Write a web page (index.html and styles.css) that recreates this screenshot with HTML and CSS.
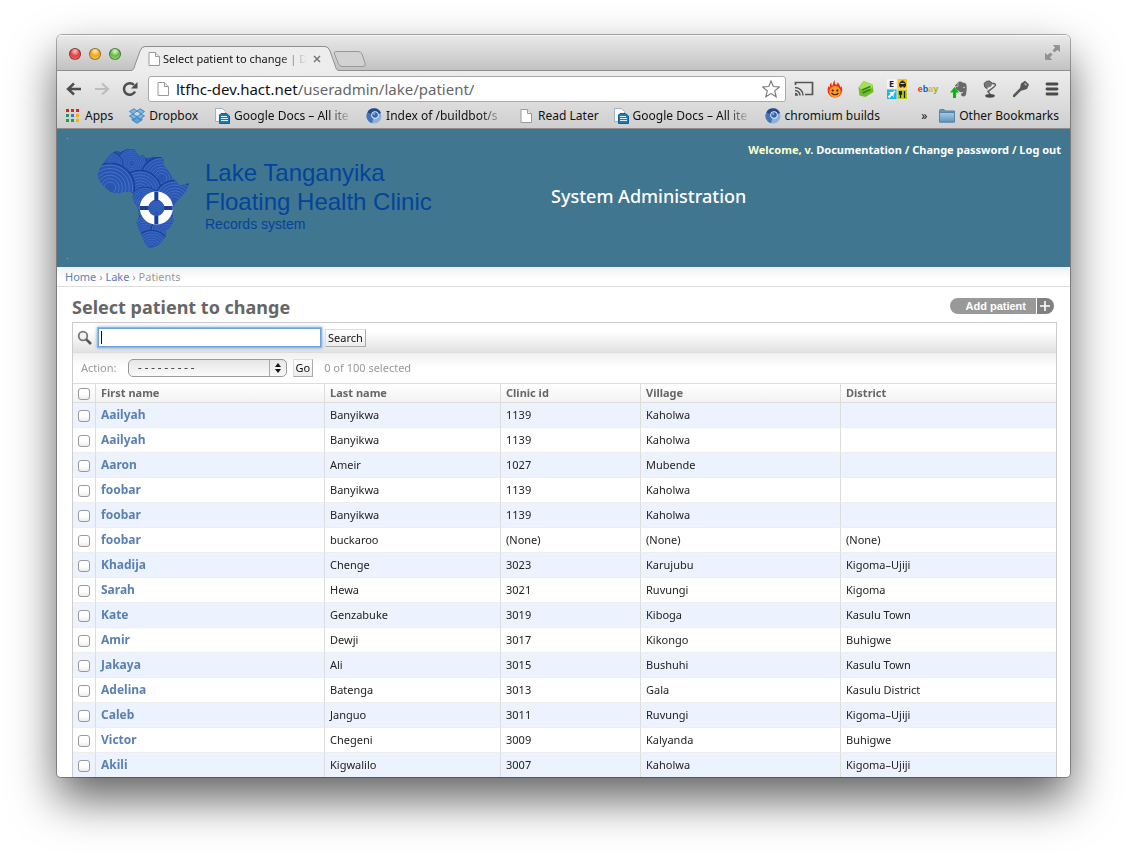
FILE: index.html
```
<!DOCTYPE html>
<html lang="en">
<head>
<meta charset="utf-8">
<title>Select patient to change</title>
<link rel="stylesheet" href="styles.css">
</head>
<body>
<svg class="defs" aria-hidden="true">
  <defs>
    <linearGradient id="gFolder" x1="0" y1="0" x2="0" y2="1"><stop offset="0" stop-color="#a5cce3"/><stop offset="1" stop-color="#5e97bd"/></linearGradient>
    <symbol id="page" viewBox="0 0 12 14"><path d="M1 .5h6.500L11.500 4.500v9H1z" fill="#fff" stroke="#9a9a9a"/><path d="M7.500.5v4h4" fill="#e8e8e8" stroke="#9a9a9a"/></symbol>
    <symbol id="docs" viewBox="0 0 16 16"><path d="M1.500.5h7l3 3v10h-10z" fill="#fafafa" stroke="#9bb3c4"/><path d="M7 5.500h5.500L15.500 8v7.500H5.500V7z" fill="#1f78b4" stroke="#0f5f97"/><path d="M7 8.500h6M7 10.500h7M7 12.500h7" stroke="#d8efff"/></symbol>
    <symbol id="chromium" viewBox="0 0 16 16"><circle cx="8" cy="8" r="7.500" fill="#8fb0dd"/><path d="M8 8L1.300 4.500A7.500 7.500 0 0 0 6 15.200z" fill="#4674b8"/><path d="M8 8L1.300 4.500A7.500 7.500 0 0 1 15 5z" fill="#24488a"/><circle cx="9" cy="7" r="3.800" fill="#dfe9f7"/><circle cx="9" cy="7" r="2.800" fill="#2f66b5"/><circle cx="8.200" cy="6" r="1" fill="#8db4ea"/></symbol>
    <symbol id="hill" viewBox="-52 -52 104 104"><circle r="51" fill="#2a56b1" stroke="#1a3f9a" stroke-width="3"/><g fill="none" stroke="#4a79cc" stroke-width="1.800"><circle r="47"/><circle r="40"/><circle r="33"/><circle r="26"/><circle r="19"/><circle r="12"/></g></symbol>
    <clipPath id="africa"><path d="M78 32L92 36L110 28L132 27L138 37L148 48L160 46L165 53L172 55L190 50L215 52L222 60L219 72L238 98L248 115L262 128L268 137L280 134L297 129L290 150L275 168L258 185L246 205L248 225L250 245L240 262L228 272L226 290L215 303L205 315L185 323L175 322L165 308L158 292L146 265L140 250L148 232L144 205L135 190L128 172L132 162L122 155L100 156L80 158L62 156L45 142L28 122L24 105L30 85L45 62L62 42Z"/></clipPath>
  </defs>
</svg>
<div class="window">
  <header class="chrome">
    <div class="titlebar">
      <div class="lights"><button class="light red" aria-label="Close"></button><button class="light amber" aria-label="Minimise"></button><button class="light green" aria-label="Zoom"></button></div>
      <svg class="slope" viewBox="0 0 14 25"><path d="M0 25C3 24 3 22 4 19L9 5Q10.500 .5 14 .5V25z" fill="#ededed"/><path d="M0 24.500C3 24 3 22 4 19L9 5Q10.500 .5 14 .5" fill="none" stroke="#8f8f8f"/></svg>
      <div class="tab"><svg class="ic-page"><use href="#page"/></svg><span class="tab-title fade">Select patient to change | D</span><button class="tab-close" aria-label="Close tab"><svg viewBox="0 0 8 8"><path d="M1 1l6 6M7 1L1 7" stroke="#777" stroke-width="1.500"/></svg></button></div>
      <svg class="slope" viewBox="0 0 14 25"><path d="M14 25C11 24 11 22 10 19L5 5Q3.500 .5 0 .5V25z" fill="#ededed"/><path d="M14 24.500C11 24 11 22 10 19L5 5Q3.500 .5 0 .5" fill="none" stroke="#8f8f8f"/></svg>
      <button class="newtab" aria-label="New tab"><svg viewBox="0 0 34 18"><path d="M2.500 1.500H25Q28 1.500 29 4L32 13Q33 16.500 30 16.500H9Q6.500 16.500 5.500 14L1.500 4Q1 1.500 2.500 1.500z" fill="#d2d2d2" stroke="#989898"/></svg></button>
      <button class="fullscreen" aria-label="Full screen"><svg viewBox="0 0 15 15"><path d="M8.500.5h6v6L12.500 4.500 9.500 7 8 5.500 10.500 2.500zM.5 8.500l2 2L5.500 8 7 9.500 4.500 12.500l2 2h-6z" fill="#929292" stroke="#7f7f7f" stroke-width=".6"/></svg></button>
    </div>
    <div class="toolbar">
      <button class="nav" aria-label="Back"><svg viewBox="0 0 16 16"><path d="M8 2.500L2 8l6 5.500M2.500 8H15" fill="none" stroke="#4d4d4d" stroke-width="2.400"/></svg></button>
      <button class="nav" aria-label="Forward"><svg viewBox="0 0 16 16"><path d="M8 2.500L14 8l-6 5.500M13.500 8H1" fill="none" stroke="#bdbdbd" stroke-width="2.200"/></svg></button>
      <button class="nav" aria-label="Reload"><svg viewBox="0 0 16 16"><path d="M13 10.500A5.800 5.800 0 1 1 12 4" fill="none" stroke="#4d4d4d" stroke-width="2.500"/><path d="M15.500 1v6.500H9z" fill="#4d4d4d"/></svg></button>
      <div class="omnibox"><svg class="ic-page"><use href="#page"/></svg><span class="url">ltfhc-dev.hact.net<i>/useradmin/lake/patient/</i></span><svg class="star" viewBox="0 0 18 18"><path d="M9 1l2.300 5.500 6 .5-4.600 3.900 1.500 5.900L9 13.600l-5.200 3.200 1.500-5.900L.7 7l6-.5z" fill="#fff" stroke="#777" stroke-width="1.100"/></svg></div>
      <div class="exts">
        <svg class="wide" viewBox="0 0 20 18"><path d="M1.500 5V2.500h17v12H11" fill="none" stroke="#555" stroke-width="1.700"/><path d="M1 10.500a5 5 0 0 1 5 5M1 7.500a8 8 0 0 1 8 8" fill="none" stroke="#555" stroke-width="1.500"/><path d="M1 12.700a3 3 0 0 1 3 3H1z" fill="#555"/></svg>
        <svg viewBox="0 0 16 18"><path d="M8 0Q7 3 9 5Q11 4 10.500 2Q13.500 5 13 7.500L14.500 6Q16 10 14.500 13Q12.500 17.500 8 17.500T1 13Q-.3 9 1.500 6L3 7.500Q2 4 4.500 2.500Q4 5 5.500 5.500Q5.500 2 8 0z" fill="#e8351a"/><circle cx="8" cy="11.700" r="5.700" fill="#ff9b22"/><circle cx="5.700" cy="10.500" r="1.100" fill="#3c1705"/><circle cx="10.300" cy="10.500" r="1.100" fill="#3c1705"/><path d="M4.500 13Q8 16.500 11.500 13" fill="none" stroke="#4a1b05" stroke-width="1.100"/></svg>
        <svg viewBox="0 0 17 18"><path d="M6 1L15 4.500 16 12 8 17 2 15.500 1 7.500z" fill="#74bd2a"/><path d="M6 1L15 4.500 14.500 8 5 10 1 7.500z" fill="#a5df52"/><path d="M4.500 10L13 6.500M5 13L13 9.500" stroke="#2d861f" stroke-width="1.500"/></svg>
        <svg class="wide" viewBox="0 0 20 20"><path fill="#f4f4f4" d="M0 0h9.500v9.500H0z"/><path fill="#f9c808" d="M10.500 0H20v9.500h-9.500z"/><path fill="#19b7ea" d="M0 10.500h9.500V20H0z"/><path fill="#bdca22" d="M10.500 10.500H20V20h-9.500z"/><text x="2" y="8" class="e">E</text><path d="M12 5l1.500-2.500h1v-1h2v1h1L19 5v2.500h-1v1h-1.500v-1h-2v1H13v-1h-1z" fill="#222"/><path d="M13.500 4.500h4" stroke="#f9c808"/><path d="M1.500 18.500L8 12" stroke="#fff" stroke-width="1.800"/><path d="M2 13l4 .3 1 5.200z M1.500 16.500h2v2z" fill="#fff"/><path d="M13.500 12v7M12.500 12v3h2v-3M17.500 12v7" fill="none" stroke="#222" stroke-width="1.300"/></svg>
        <span class="ebay"><b class="r">e</b><b class="b">b</b><b class="y">a</b><b class="g">y</b></span>
        <svg viewBox="0 0 18 18"><path d="M5 5.500L8 2.500Q8 1.500 10 1.500Q12 1.500 12.500 2.500Q16 2.500 16.500 5Q17.300 9 16 14.500Q15.500 16.500 13.500 16.500Q11 16.500 11 14.500Q11 12.500 13 13V12Q11 12.500 10 12L6 9z" fill="#686868"/><path d="M8 2.500v4H5" fill="none" stroke="#ccc" stroke-width=".7"/><circle cx="14" cy="7.500" r=".8" fill="#ddd"/><path d="M4.500 7l4.500 5.500H6V18H3v-5.500H0z" fill="#08b70d"/></svg>
        <svg viewBox="0 0 18 18"><path d="M3 3.500Q5 .5 8.500 1L13 4.500 6.500 9Q3 8 3 3.500z" fill="#777" stroke="#555"/><path d="M6.500 8.500Q10 9 12.500 4.500" fill="none" stroke="#eee" stroke-width="2"/><path d="M12 3Q16 4.500 13.500 6.500L7 11.500 9.500 15" fill="none" stroke="#666" stroke-width="1.600"/><ellipse cx="9" cy="15.800" rx="4.800" ry="1.900" fill="#484848"/></svg>
        <svg viewBox="0 0 18 18"><path d="M9 3.500L13 .8l4 3.700-2 4.500-4 1.200-2 .5-6.500 6.500-1.500-.2v-2L8 8z" fill="#585858"/><path d="M12.500 3.500l2 1.800" stroke="#bbb" stroke-width="1.500"/></svg>
        <button class="menu" aria-label="Menu"><svg viewBox="0 0 18 18"><path d="M4 4h10M4 9h10M4 14h10" stroke="#4a4a4a" stroke-width="2.800" stroke-linecap="round"/></svg></button>
      </div>
    </div>
    <nav class="bookmarks">
      <a href="#"><svg class="bm" viewBox="0 0 16 16"><path fill="#d22" d="M1 1h3v3H1zM6 1h3v3H6zM11 1h3v3h-3z"/><path fill="#1f9d58" d="M1 6h3v3H1zM1 11h3v3H1zM6 11h3v3H6z"/><path fill="#2a7de1" d="M6 6h3v3H6z"/><path fill="#f4b400" d="M11 6h3v3h-3zM11 11h3v3h-3z"/></svg><span>Apps</span></a>
      <a href="#"><svg class="bm" viewBox="0 0 16 16"><path d="M5 .7L8 3 4 6 .5 3.500zM11 .7L8 3l4 3 3.500-2.500zM.5 8L4 6l4 2.500L5 11zM15.500 8L12 6 8 8.500l3 2.500z" fill="#78b7ea" stroke="#2b78bd" stroke-width=".8"/><path d="M8 9.300L5 12l-2-1.300V12l5 3.300 5-3.300v-1.300L11 12z" fill="#5ea3de" stroke="#2b78bd" stroke-width=".8"/></svg><span>Dropbox</span></a>
      <a href="#"><svg class="bm"><use href="#docs"/></svg><span class="long fade">Google Docs – All ite</span></a>
      <a href="#"><svg class="bm"><use href="#chromium"/></svg><span class="long fade">Index of /buildbot/s</span></a>
      <a href="#"><svg class="bm-page"><use href="#page"/></svg><span>Read Later</span></a>
      <a href="#"><svg class="bm"><use href="#docs"/></svg><span class="long fade">Google Docs – All ite</span></a>
      <a href="#"><svg class="bm"><use href="#chromium"/></svg><span>chromium builds</span></a>
      <div class="other"><button class="more" aria-label="More bookmarks">»</button><a href="#"><svg class="bm" viewBox="0 0 16 16"><path d="M.5 14V2.500Q.5 1.500 1.500 1.500H5L6.500 3H15.500V14z" fill="#5e97bd" stroke="#5585a5"/><path d="M.5 4.500h15V14H.5z" fill="url(#gFolder)" stroke="#5585a5"/></svg><span>Other Bookmarks</span></a></div>
    </nav>
  </header>
  <main class="page">
    <div class="banner">
      <svg class="logo" viewBox="67 137 133 122">
        <path d="M67 138h1v1h-1zM67 258h1v1h-1z" fill="#9fa872"/>
        <g transform="translate(90 140) scale(.33333)">
          <g clip-path="url(#africa)">
            <rect width="330" height="345" fill="#2450ac"/>
            <use href="#hill" x="80" y="25" width="90" height="90"/><use href="#hill" x="20" y="35" width="80" height="80"/><use href="#hill" x="150" y="50" width="130" height="130"/>
            <use href="#hill" x="85" y="90" width="130" height="130"/><use href="#hill" x="-15" y="68" width="150" height="150"/>
            <use href="#hill" x="190" y="120" width="130" height="130"/><use href="#hill" x="115" y="140" width="100" height="100"/><use href="#hill" x="160" y="180" width="80" height="80"/>
            <use href="#hill" x="110" y="225" width="110" height="110"/><use href="#hill" x="180" y="225" width="110" height="110"/><use href="#hill" x="130" y="270" width="110" height="110"/>
          </g>
          <circle cx="199" cy="204" r="37" fill="none" stroke="#fff" stroke-width="25"/>
          <path d="M199 155v26M199 227v26M150 204h26M222 204h26" stroke="#163f96" stroke-width="12"/>
        </g>
      </svg>
      <div class="org"><p>Lake Tanganyika</p><p>Floating Health Clinic</p><p class="sub">Records system</p></div>
      <h1 class="sysname">System Administration</h1>
      <p class="user">Welcome, v. <a href="#">Documentation</a> / <a href="#">Change password</a> / <a href="#">Log out</a></p>
    </div>
    <nav class="crumbs"><a href="#">Home</a> › <a href="#">Lake</a> › Patients</nav>
    <section class="content">
      <div class="heading"><h2>Select patient to change</h2><a class="add" href="#"><span>Add patient</span><b class="plus"><svg viewBox="0 0 10 10"><path d="M5 0v10M0 5h10" stroke="#fff" stroke-width="1.600"/></svg></b></a></div>
      <div class="changelist">
        <form class="search"><label for="q" aria-label="Search"><svg viewBox="0 0 16 16"><circle cx="6" cy="6" r="4.300" fill="#f2f2f2" stroke="#777" stroke-width="1.800"/><path d="M9.300 9.300L14 14" stroke="#555" stroke-width="2.600"/></svg></label><input id="q" type="text" autofocus><button type="button">Search</button></form>
        <form class="actions"><label for="act">Action:</label><span class="pick"><select id="act"><option>---------</option></select><svg viewBox="0 0 6 10"><path d="M3 0l3 4H0zM3 10l3-4H0z" fill="#111"/></svg></span><button type="button">Go</button><span>0 of 100 selected</span></form>
        <table>
          <colgroup><col class="c-box"><col class="c-first"><col class="c-last"><col class="c-id"><col class="c-village"><col></colgroup>
          <thead><tr><th><input type="checkbox" aria-label="Select all"></th><th>First name</th><th>Last name</th><th>Clinic id</th><th>Village</th><th>District</th></tr></thead>
          <tbody>
            <tr><td><input type="checkbox" aria-label="Select"></td><th><a href="#">Aailyah</a></th><td>Banyikwa</td><td>1139</td><td>Kaholwa</td><td></td></tr>
            <tr><td><input type="checkbox" aria-label="Select"></td><th><a href="#">Aailyah</a></th><td>Banyikwa</td><td>1139</td><td>Kaholwa</td><td></td></tr>
            <tr><td><input type="checkbox" aria-label="Select"></td><th><a href="#">Aaron</a></th><td>Ameir</td><td>1027</td><td>Mubende</td><td></td></tr>
            <tr><td><input type="checkbox" aria-label="Select"></td><th><a href="#">foobar</a></th><td>Banyikwa</td><td>1139</td><td>Kaholwa</td><td></td></tr>
            <tr><td><input type="checkbox" aria-label="Select"></td><th><a href="#">foobar</a></th><td>Banyikwa</td><td>1139</td><td>Kaholwa</td><td></td></tr>
            <tr><td><input type="checkbox" aria-label="Select"></td><th><a href="#">foobar</a></th><td>buckaroo</td><td>(None)</td><td>(None)</td><td>(None)</td></tr>
            <tr><td><input type="checkbox" aria-label="Select"></td><th><a href="#">Khadija</a></th><td>Chenge</td><td>3023</td><td>Karujubu</td><td>Kigoma–Ujiji</td></tr>
            <tr><td><input type="checkbox" aria-label="Select"></td><th><a href="#">Sarah</a></th><td>Hewa</td><td>3021</td><td>Ruvungi</td><td>Kigoma</td></tr>
            <tr><td><input type="checkbox" aria-label="Select"></td><th><a href="#">Kate</a></th><td>Genzabuke</td><td>3019</td><td>Kiboga</td><td>Kasulu Town</td></tr>
            <tr><td><input type="checkbox" aria-label="Select"></td><th><a href="#">Amir</a></th><td>Dewji</td><td>3017</td><td>Kikongo</td><td>Buhigwe</td></tr>
            <tr><td><input type="checkbox" aria-label="Select"></td><th><a href="#">Jakaya</a></th><td>Ali</td><td>3015</td><td>Bushuhi</td><td>Kasulu Town</td></tr>
            <tr><td><input type="checkbox" aria-label="Select"></td><th><a href="#">Adelina</a></th><td>Batenga</td><td>3013</td><td>Gala</td><td>Kasulu District</td></tr>
            <tr><td><input type="checkbox" aria-label="Select"></td><th><a href="#">Caleb</a></th><td>Janguo</td><td>3011</td><td>Ruvungi</td><td>Kigoma–Ujiji</td></tr>
            <tr><td><input type="checkbox" aria-label="Select"></td><th><a href="#">Victor</a></th><td>Chegeni</td><td>3009</td><td>Kalyanda</td><td>Buhigwe</td></tr>
            <tr><td><input type="checkbox" aria-label="Select"></td><th><a href="#">Akili</a></th><td>Kigwalilo</td><td>3007</td><td>Kaholwa</td><td>Kigoma–Ujiji</td></tr>
          </tbody>
        </table>
      </div>
    </section>
  </main>
</div>
</body>
</html>
```
FILE: styles.css
```
* { box-sizing: border-box; }
body { margin: 0; height: 100vh; padding: 35px 57px 79px; display: flex; overflow: hidden; background: #fff; font: 11px/14px "Noto Sans", "Open Sans", sans-serif; color: #222; }
p, h1, h2 { margin: 0; }
a { text-decoration: none; color: #5b80b2; }
button { font: inherit; border: 0; padding: 0; background: none; color: inherit; }
svg { display: block; flex: none; }
.defs { position: absolute; width: 0; height: 0; }
.window { flex: 1; min-width: 0; display: flex; flex-direction: column; overflow: hidden; border-radius: 5px 5px 4px 4px; background: #fff; box-shadow: 0 0 0 1px rgba(0, 0, 0, .3), 0 22px 46px rgba(0, 0, 0, .62); }

.chrome { flex: none; background: linear-gradient(#ededed 36px, #cfcfcf); border-bottom: 1px solid #8d8d8d; color: #111; font-size: 12px; line-height: 16px; }
.titlebar { display: flex; align-items: flex-end; height: 36px; background: linear-gradient(#eaeaea, #c2c2c2); border-bottom: 1px solid #8f8f8f; box-shadow: inset 0 1px #f8f8f8; }
.lights { display: flex; gap: 8px; padding: 0 10px 10px 12px; }
.light { width: 12px; height: 12px; border-radius: 50%; border: 1px solid rgba(0, 0, 0, .4); }
.red { background: radial-gradient(circle at 50% 25%, #ffc9c9, #e33f40 50%, #f07b74); }
.amber { background: radial-gradient(circle at 50% 25%, #fff0b5, #f2a51d 50%, #ffd65d); }
.green { background: radial-gradient(circle at 50% 25%, #dcfbca, #66b846 50%, #a9e884); }
.slope { width: 14px; height: 25px; margin-bottom: -1px; }
.tab { display: flex; align-items: center; width: 180px; height: 25px; margin-bottom: -1px; padding-left: 3px; background: #ededed; border-top: 1px solid #8f8f8f; }
.ic-page { width: 12px; height: 14px; }
.tab-title { width: 144px; margin-left: 3px; font-size: 11px; }
.fade { overflow: hidden; white-space: nowrap; -webkit-mask-image: linear-gradient(90deg, #000 80%, transparent); mask-image: linear-gradient(90deg, #000 80%, transparent); }
.tab-close { margin-left: 6px; }
.tab-close svg { width: 8px; height: 8px; }
.newtab { margin: 0 0 2px -6px; }
.newtab svg { width: 34px; height: 18px; }
.fullscreen { margin: 0 10px 10px auto; }
.fullscreen svg { width: 15px; height: 15px; }

.toolbar { display: flex; align-items: center; padding: 5px 8px 0 9px; }
.nav { width: 28px; }
.nav svg { width: 16px; height: 16px; }
.omnibox { flex: 1; min-width: 0; display: flex; align-items: center; height: 26px; margin-left: -2px; padding: 0 5px 0 8px; border: 1px solid #aaa; border-radius: 3px; background: #fff; }
.url { flex: 1; margin-left: 7px; font-size: 15px; line-height: 20px; white-space: nowrap; overflow: hidden; }
.url i { font-style: normal; color: #666; }
.star { width: 18px; height: 18px; }
.exts { display: flex; align-items: center; justify-content: space-between; width: 268px; margin-left: 8px; }
.exts svg { width: 18px; height: 18px; margin: 0 1px; overflow: visible; }
.exts .wide { width: 20px; height: 20px; margin: 0; }
.e { font: bold 9px "Noto Sans", sans-serif; fill: #222; }
.ebay { width: 20px; justify-content: center; font: bold 9px/16px "Liberation Sans", sans-serif; display: flex; }
.r { color: #e53238; } .b { color: #0064d2; } .y { color: #f5af02; } .g { color: #86b817; }

.bookmarks { display: flex; align-items: center; gap: 14px; height: 26px; padding: 1px 11px 0 8px; white-space: nowrap; }
.bookmarks a { display: flex; align-items: center; gap: 4px; color: #111; }
.bm { width: 16px; height: 16px; }
.bm-page { width: 12px; height: 14px; margin: 0 2px; }
.long { width: 118px; }
.bookmarks > a:nth-child(-n+2) { margin-right: 2px; }
.other { display: flex; gap: 12px; margin-left: auto; }

.page { flex: 1; min-height: 0; overflow: hidden; }
.banner { position: relative; display: flex; height: 138px; padding: 8px 9px 0 10px; background: #417690; }
.logo { width: 133px; height: 122px; }
.org { margin: 21px 0 0 5px; width: 346px; font: 24px/29px "Liberation Sans", Arial, sans-serif; color: #03449b; }
.org .sub { font-size: 14px; line-height: 16px; }
.sysname { margin-top: 47px; font-size: 18px; line-height: 24px; font-weight: 500; color: #fff; white-space: nowrap; }
.user { position: absolute; top: 14px; right: 9px; font-weight: 700; color: #ffc; }
.user a { color: #fff; }
.crumbs { padding: 3px 8px 2px; height: 20px; border-bottom: 1px solid #ddd; background: linear-gradient(#f0f0f0, #fff 12px); color: #999; }
.content { padding: 8px 13px 0 15px; }
.heading { display: flex; justify-content: space-between; padding-right: 3px; height: 27px; }
h2 { font-size: 18px; line-height: 24px; color: #666; }
.add { display: flex; height: 16px; margin-top: 3px; font: bold 11px/16px "Liberation Sans", Arial, sans-serif; color: #fff; }
.add span { padding: 0 10px 0 16px; border-radius: 8px 0 0 8px; background: #999; }
.plus { width: 17px; margin-left: 1px; padding: 3px; border-radius: 0 8px 8px 0; background: #808080; }
.plus svg { width: 10px; height: 10px; }
.changelist { border: 1px solid #ccc; }
.search, .actions { display: flex; align-items: center; }
.search { height: 30px; padding-left: 4px; background: linear-gradient(#fff 8px, #e2e2e2); border-bottom: 1px solid #ddd; }
.search svg { width: 16px; height: 16px; }
.search input { width: 223px; height: 19px; margin: 0 4px 0 5px; padding: 0 3px; border: 1px solid #6fa3d8; outline: 0; box-shadow: 0 0 0 1px #8db8e4, 0 0 3px 1px #76a9dc; background: #fff linear-gradient(#111, #111) 2px 50% / 1px 13px no-repeat; font: inherit; }
form button { height: 18px; padding: 0 2px; border: 1px solid; border-color: #ddd #aaa #aaa #ddd; background: linear-gradient(#fff, #ececec); color: #111; }
.actions { height: 30px; padding-left: 8px; color: #999; background: linear-gradient(#f0f0f0, #fff 14px); }
.pick { position: relative; margin: 0 6px 0 11px; }
.pick select { display: block; width: 159px; height: 18px; padding: 0 8px; border: 1px solid #999; border-radius: 5px; appearance: none; background: linear-gradient(#e6e6e6, #fafafa); font: 11px/14px "Liberation Mono", monospace; color: #333; }
.pick svg { position: absolute; right: 6px; top: 4px; width: 6px; height: 10px; }
.pick::after { content: ""; position: absolute; right: 17px; top: 1px; bottom: 1px; width: 1px; background: #aaa; }
.actions span:last-child { margin-left: 11px; }
table { width: 100%; table-layout: fixed; border-collapse: separate; border-spacing: 0; }
.c-box { width: 23px; } .c-first { width: 229px; } .c-last { width: 176px; } .c-id { width: 140px; } .c-village { width: 200px; }
th, td { height: 25px; padding: 0 5px; border-right: 1px solid #ddd; border-bottom: 1px solid #eee; text-align: left; vertical-align: middle; }
th:last-child, td:last-child { border-right: 0; }
thead th { height: 20px; border-top: 1px solid #ddd; border-bottom-color: #ddd; background: linear-gradient(#fff, #f3f3f3); color: #666; }
tbody th { font-size: 12px; padding-bottom: 1px; }
tbody tr:nth-child(odd) { background: #ecf2fe; }
table input { appearance: none; display: block; width: 12px; height: 12px; margin: 1px 0 0; border: 1px solid #999; border-radius: 3px; background: linear-gradient(#fff 50%, #ececec); }
tbody input { margin-top: 2px; }
```
